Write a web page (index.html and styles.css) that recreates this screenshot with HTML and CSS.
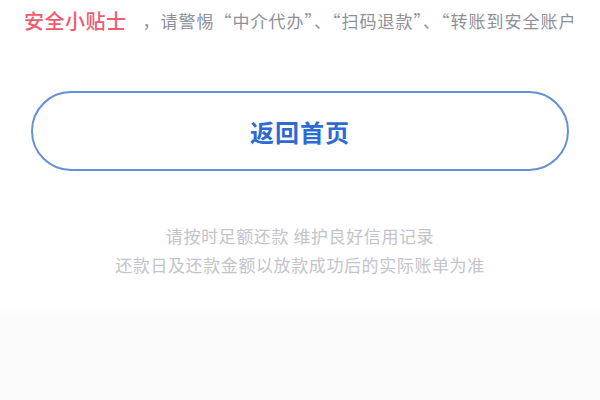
FILE: index.html
```html
<!DOCTYPE html>
<html lang="zh">
<head>
<meta charset="utf-8">
<link rel="stylesheet" href="styles.css">
</head>
<body>
<div class="page">
  <div class="tip">
    <span class="tip-title">安全小贴士</span>
    <span class="tip-text">，请警惕“中介代办”、“扫码退款”、“转账到安全账户</span>
  </div>
  <div class="btn-wrap">
    <div class="btn">返回首页</div>
  </div>
  <div class="notes">
    <div class="note">请按时足额还款 维护良好信用记录</div>
    <div class="note">还款日及还款金额以放款成功后的实际账单为准</div>
  </div>
  <div class="footer"></div>
</div>
</body>
</html>
```
FILE: styles.css
```css
html, body {
  margin: 0;
  padding: 0;
  width: 600px;
  height: 400px;
  overflow: hidden;
  background: #ffffff;
}
.page {
  width: 600px;
  height: 400px;
  display: flex;
  flex-direction: column;
  font-family: "Noto Sans CJK SC", "Noto Sans", sans-serif;
  background: linear-gradient(to bottom, #ffffff 0, #ffffff 305px, #fbfbfb 320px, #fafafa 400px);
}
.tip {
  display: flex;
  align-items: center;
  height: 40px;
  padding-left: 24px;
  white-space: nowrap;
  overflow: hidden;
}
.tip-title {
  color: #ef5a6e;
  font-size: 20px;
  font-weight: 500;
  letter-spacing: 0.5px;
  margin-right: 16px;
}
.tip-text {
  color: #8e9098;
  font-size: 17px;
  letter-spacing: 1px;
}
.btn-wrap {
  padding: 51px 31px 0;
}
.btn {
  height: 76px;
  border: 2px solid #6590d6;
  border-radius: 40px;
  display: flex;
  align-items: center;
  justify-content: center;
  color: #2d6ad4;
  font-size: 24px;
  font-weight: 700;
  letter-spacing: 1px;
  background: #ffffff;
}
.notes {
  padding-top: 50px;
  display: flex;
  flex-direction: column;
  align-items: center;
}
.note {
  color: #c3c4c9;
  font-size: 17px;
  line-height: 29px;
  letter-spacing: 0.6px;
}
.footer {
  flex: 1;
}
```
